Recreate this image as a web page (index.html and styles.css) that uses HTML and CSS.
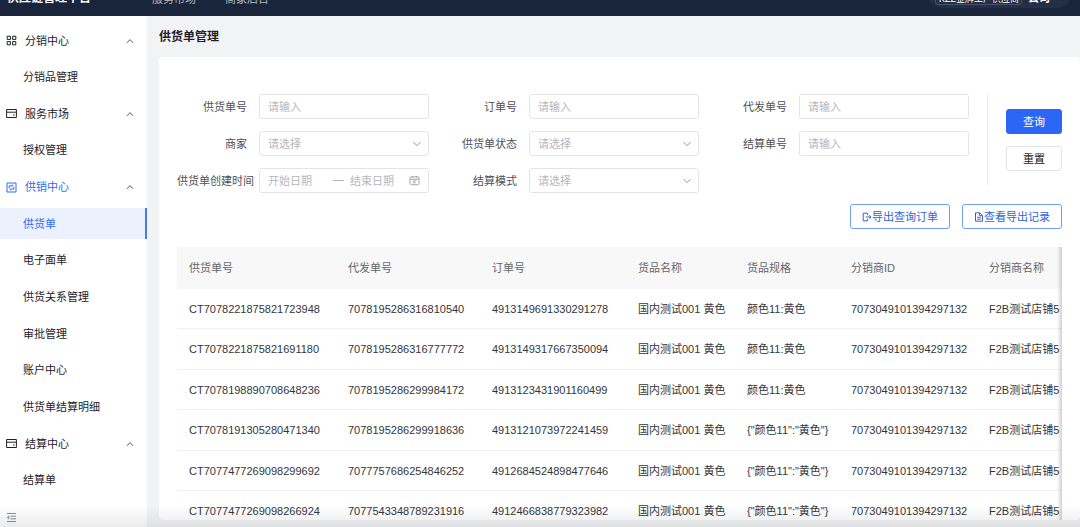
FILE: index.html
```html
<!DOCTYPE html>
<html lang="zh-CN">
<head>
<meta charset="utf-8">
<title>供货单管理</title>
<link rel="stylesheet" href="styles.css">
</head>
<body>
<svg class="sprite" aria-hidden="true">
  <symbol id="up" viewBox="0 0 8 8"><path d="M1 5.8 4 2.6 7 5.8"/></symbol>
  <symbol id="down" viewBox="0 0 8 8"><path d="M.6 2.2 4 5.7 7.4 2.2"/></symbol>
  <symbol id="grid" viewBox="0 0 11 11"><path d="M1.2 1.2h3.2v3.2H1.2zM6.6 1.2h3.2v3.2H6.6zM1.2 6.6h3.2v3.2H1.2zM6.6 6.6h3.2v3.2H6.6z"/></symbol>
  <symbol id="wallet" viewBox="0 0 11 11"><path d="M.6 1.5h9.8v8H.6zM.6 4.2h9.8M7 7h1.6"/></symbol>
  <symbol id="supply" viewBox="0 0 11 11"><path d="M1 1h9v9H1zM3.200 6V3.900h4M6.200 2.800l1.100 1.100M7.800 5v2.100h-4M4.800 8.200 3.700 7.100"/></symbol>
  <symbol id="collapse" viewBox="0 0 11 11"><path d="M1 1.5h9M4.5 4.2H10M4.5 6.8H10M1 9.5h9M2.8 4 1.2 5.5 2.8 7z"/></symbol>
  <symbol id="calendar" viewBox="0 0 11 11"><path d="M1 3.200c0-1 .5-1.400 1.400-1.400h6.200c.9 0 1.400.4 1.400 1.400v5c0 1-.5 1.500-1.400 1.500H2.400C1.500 9.700 1 9.200 1 8.200zM1 4.200h9M3.200 1v1.600M7.800 1v1.600M3.700 6h3.600M3.700 7.800h2.800"/></symbol>
  <symbol id="export" viewBox="0 0 10 10"><path d="M5.600 3V1.200H1.200v7.600h4.400V7M3.600 5h5.200M7.300 3.300 9 5 7.300 6.700"/></symbol>
  <symbol id="file" viewBox="0 0 10 10"><path d="M1.500.8h4.300l2.700 2.700v5.700h-7zM5.600.8v2.900h2.900M3.200 5.300h3.600M3.200 7.200h3.600"/></symbol>
</svg>

<header class="topbar">
  <strong class="brand">供应链管理平台</strong>
  <nav class="topnav"><a href="#">服务市场</a><a href="#">商家后台</a></nav>
  <div class="account"><span class="tag">KZZ金牌工厂供应商</span><b>公司</b></div>
</header>

<div class="shell">
  <aside class="sidebar">
    <nav class="menu">
      <button class="group"><svg class="icon"><use href="#grid"/></svg>分销中心<svg class="arrow"><use href="#up"/></svg></button>
      <a class="item" href="#">分销品管理</a>
      <button class="group"><svg class="icon"><use href="#wallet"/></svg>服务市场<svg class="arrow"><use href="#up"/></svg></button>
      <a class="item" href="#">授权管理</a>
      <button class="group open"><svg class="icon"><use href="#supply"/></svg>供销中心<svg class="arrow"><use href="#up"/></svg></button>
      <a class="item active" href="#" aria-current="page">供货单</a>
      <a class="item" href="#">电子面单</a>
      <a class="item" href="#">供货关系管理</a>
      <a class="item" href="#">审批管理</a>
      <a class="item" href="#">账户中心</a>
      <a class="item" href="#">供货单结算明细</a>
      <button class="group"><svg class="icon"><use href="#wallet"/></svg>结算中心<svg class="arrow"><use href="#up"/></svg></button>
      <a class="item" href="#">结算单</a>
    </nav>
    <button class="collapse" aria-label="收起菜单"><svg class="icon"><use href="#collapse"/></svg></button>
  </aside>

  <main class="main">
    <h1>供货单管理</h1>
    <section class="panel">
      <form class="search">
        <div class="fields">
          <div class="field"><label for="f1">供货单号</label><input id="f1" class="control" placeholder="请输入"></div>
          <div class="field"><label for="f2">订单号</label><input id="f2" class="control" placeholder="请输入"></div>
          <div class="field"><label for="f3">代发单号</label><input id="f3" class="control" placeholder="请输入"></div>
          <div class="field"><label for="f4">商家</label><div class="select"><select id="f4" class="control"><option>请选择</option></select><svg><use href="#down"/></svg></div></div>
          <div class="field"><label for="f5">供货单状态</label><div class="select"><select id="f5" class="control"><option>请选择</option></select><svg><use href="#down"/></svg></div></div>
          <div class="field"><label for="f6">结算单号</label><input id="f6" class="control" placeholder="请输入"></div>
          <div class="field"><label class="long" for="f7">供货单创建时间</label><div class="control range"><input id="f7" placeholder="开始日期"><span class="dash"></span><input aria-label="结束日期" placeholder="结束日期"><svg class="icon"><use href="#calendar"/></svg></div></div>
          <div class="field"><label for="f8">结算模式</label><div class="select"><select id="f8" class="control"><option>请选择</option></select><svg><use href="#down"/></svg></div></div>
        </div>
        <div class="actions">
          <button type="submit" class="btn primary">查询</button>
          <button type="reset" class="btn">重置</button>
        </div>
      </form>
      <div class="toolbar">
        <button class="btn outline"><svg><use href="#export"/></svg>导出查询订单</button>
        <button class="btn outline"><svg><use href="#file"/></svg>查看导出记录</button>
      </div>
      <div class="table-wrap">
        <table>
          <colgroup><col class="c-supply"><col class="c-proxy"><col class="c-order"><col class="c-goods"><col class="c-spec"><col class="c-id"><col></colgroup>
          <thead><tr><th>供货单号</th><th>代发单号</th><th>订单号</th><th>货品名称</th><th>货品规格</th><th>分销商ID</th><th>分销商名称</th></tr></thead>
          <tbody>
            <tr><td>CT7078221875821723948</td><td>7078195286316810540</td><td>4913149691330291278</td><td>国内测试001 黄色</td><td>颜色11:黄色</td><td>7073049101394297132</td><td>F2B测试店铺5</td></tr>
            <tr><td>CT7078221875821691180</td><td>7078195286316777772</td><td>4913149317667350094</td><td>国内测试001 黄色</td><td>颜色11:黄色</td><td>7073049101394297132</td><td>F2B测试店铺5</td></tr>
            <tr><td>CT7078198890708648236</td><td>7078195286299984172</td><td>4913123431901160499</td><td>国内测试001 黄色</td><td>颜色11:黄色</td><td>7073049101394297132</td><td>F2B测试店铺5</td></tr>
            <tr><td>CT7078191305280471340</td><td>7078195286299918636</td><td>4913121073972241459</td><td>国内测试001 黄色</td><td>{"颜色11":"黄色"}</td><td>7073049101394297132</td><td>F2B测试店铺5</td></tr>
            <tr><td>CT7077477269098299692</td><td>7077757686254846252</td><td>4912684524898477646</td><td>国内测试001 黄色</td><td>{"颜色11":"黄色"}</td><td>7073049101394297132</td><td>F2B测试店铺5</td></tr>
            <tr><td>CT7077477269098266924</td><td>7077543348789231916</td><td>4912466838779323982</td><td>国内测试001 黄色</td><td>{"颜色11":"黄色"}</td><td>7073049101394297132</td><td>F2B测试店铺5</td></tr>
          </tbody>
        </table>
      </div>
    </section>
  </main>
</div>
</body>
</html>
```

FILE: styles.css
```css
* { box-sizing: border-box; }
body {
  margin: 0;
  height: 100vh;
  display: flex;
  flex-direction: column;
  overflow: hidden;
  background: #f2f3f5;
  color: #1d2129;
  font: 11px/16px "Liberation Sans", "Noto Sans CJK SC", sans-serif;
}
button, input, select { font: inherit; color: inherit; margin: 0; }
button { cursor: pointer; }
a { color: inherit; text-decoration: none; }
svg { fill: none; stroke: currentColor; stroke-width: 1; flex: none; }
.sprite { display: none; }
.icon { width: 11px; height: 11px; }

/* Top bar */
.topbar {
  flex: none;
  height: 16px;
  display: flex;
  align-items: flex-end;
  overflow: hidden;
  padding: 0 8px 0 7px;
  background: #19253b;
  color: #fff;
}
.brand { font-size: 12px; padding-bottom: 10px; width: 145px; }
.topnav { display: flex; gap: 29px; padding-bottom: 9px; color: #b4bac5; }
.account {
  margin: 0 0 8px auto;
  display: flex;
  align-items: flex-end;
  gap: 6px;
  height: 32px;
  width: 145px;
  padding: 0 8px 3px;
  border-radius: 16px;
  background: #232f46;
}
.account b { line-height: 14px; }
.tag {
  width: 87px;
  padding: 0 3px;
  border: 1px solid #465167;
  border-radius: 3px;
  font-size: 9px;
  line-height: 10px;
  white-space: nowrap;
}

/* Layout */
.shell { flex: 1; min-height: 0; display: flex; position: relative; }
.shell::after {
  content: "";
  position: absolute;
  inset: auto 0 0 0;
  height: 22px;
  background: linear-gradient(#0000, #00000014);
  pointer-events: none;
}
.sidebar {
  flex: none;
  width: 147px;
  display: flex;
  flex-direction: column;
  padding-top: 9px;
  background: #fff;
}
.menu { flex: 1; display: flex; flex-direction: column; justify-content: space-between; }
.group, .item { height: 31px; display: flex; align-items: center; border: 0; background: none; }
.group { gap: 8px; padding: 0 13px 0 6px; text-align: left; }
.group.open { color: #2f6bf3; }
.arrow { width: 8px; height: 8px; margin-left: auto; color: #4e5969; }
.item { padding-left: 23px; }
.item.active { background: #ebf2fe; color: #2f6bf3; border-right: 2px solid #4379f5; }
.collapse { height: 31px; padding: 11px 0 0 6px; border: 0; background: none; text-align: left; color: #86909c; line-height: 0; }

/* Content */
.main { flex: 1; min-width: 0; display: flex; flex-direction: column; padding: 13px 0 7px 12px; }
h1 { margin: 0 0 12px; font-size: 12px; line-height: 16px; font-weight: 700; }
.panel {
  flex: 1;
  min-height: 0;
  overflow: hidden;
  padding: 37px 18px 0;
  border-radius: 4px;
  background: #fff;
}
.search { display: flex; }
.fields {
  flex: 1;
  display: grid;
  grid-template-columns: repeat(3, minmax(0, 1fr));
  gap: 12px 18px;
}
.field { display: flex; align-items: center; }
.field label { flex: none; width: 82px; padding-right: 12px; text-align: right; white-space: nowrap; color: #4e5156; }
.field .long { padding-right: 5px; }
.control {
  flex: 1;
  min-width: 0;
  width: 100%;
  height: 25px;
  padding: 0 8px;
  border: 1px solid #e3e4e6;
  border-radius: 3px;
  background: #fff;
  outline: 0;
}
.control::placeholder, .range input::placeholder { color: #b5b7bb; opacity: 1; }
.select { flex: 1; min-width: 0; display: grid; align-items: center; color: #b5b7bb; }
.select > * { grid-area: 1 / 1; }
.select select { appearance: none; }
.select svg { width: 8px; height: 8px; margin-right: 8px; justify-self: end; color: #8f9399; pointer-events: none; }
.range { display: flex; align-items: center; color: #a0a3a8; }
.range input { flex: 1; min-width: 0; width: 0; padding: 0; border: 0; outline: 0; background: none; }
.dash { width: 11px; height: 1px; margin: 0 6px; background: #b5b7bb; }
.actions {
  display: flex;
  flex-direction: column;
  gap: 12px;
  width: 75px;
  height: 91px;
  margin-left: 18px;
  padding: 15px 0 0 18px;
  border-left: 1px solid #e9eaec;
}
.btn {
  height: 25px;
  display: flex;
  align-items: center;
  justify-content: center;
  padding: 0 11px;
  border: 1px solid #e3e4e6;
  border-radius: 3px;
  background: #fff;
}
.primary { border-color: #2b66f6; background: #2b66f6; color: #fff; }
.outline { border-color: #6f9af8; color: #2f63dd; }
.outline svg { width: 10px; height: 10px; }
.toolbar { display: flex; justify-content: flex-end; gap: 12px; margin: 11px 0 18px; }

/* Orders table */
.table-wrap { position: relative; overflow: hidden; }
.table-wrap::after {
  content: "";
  position: absolute;
  inset: 0 0 0 auto;
  width: 5px;
  background: linear-gradient(to right, #0000, #0000002e);
}
table { width: 100%; table-layout: fixed; border-collapse: separate; border-spacing: 0; }
.c-supply { width: 159px; }
.c-proxy { width: 144px; }
.c-order { width: 146px; }
.c-goods { width: 109px; }
.c-spec { width: 104px; }
.c-id { width: 138px; }
th, td { padding: 0 0 0 12px; text-align: left; white-space: nowrap; }
th { height: 42px; background: #f8f8f9; font-weight: 400; color: #62666d; }
td { height: 40px; border-bottom: 1px solid #f0f1f2; color: #33363b; }
tr:nth-child(even) td { height: 41px; }
```
